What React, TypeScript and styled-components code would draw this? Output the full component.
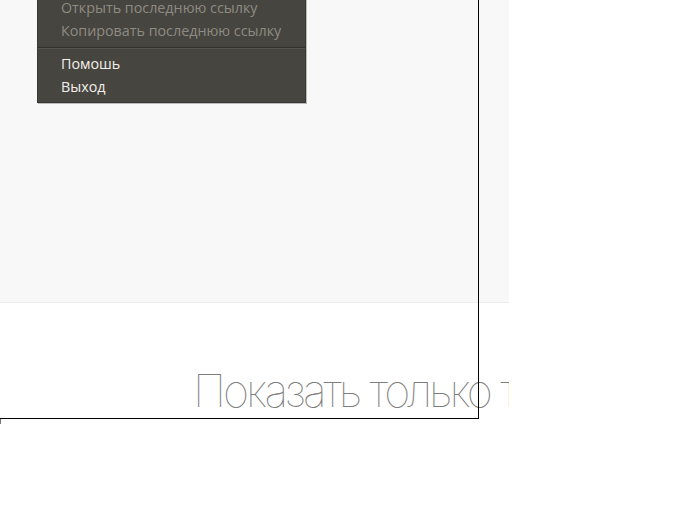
import React from "react";
import styled, { createGlobalStyle } from "styled-components";

const GlobalStyle = createGlobalStyle`
  html, body {
    margin: 0;
    padding: 0;
    background: #ffffff;
  }
  body {
    font-family: "Open Sans", "Noto Sans", sans-serif;
  }
`;

const Page = styled.div`
  position: relative;
  display: flex;
  flex-direction: column;
  width: 509px;
  height: 528px;
  overflow: hidden;
`;

const Panel = styled.div`
  position: relative;
  flex: 0 0 302px;
  background: #f8f8f8;
  border-bottom: 1px solid #ececec;
`;

const Menu = styled.ul`
  position: absolute;
  top: -3px;
  left: 37px;
  width: 267px;
  margin: 0;
  padding: 0 0 4px;
  list-style: none;
  display: flex;
  flex-direction: column;
  background: #474540;
  border: 1px solid #3a3935;
  border-top: none;
  box-shadow: 1px 1px 0 rgba(0, 0, 0, 0.25);
`;

const Item = styled.li<{ $disabled?: boolean }>`
  height: 22.5px;
  line-height: 22.5px;
  padding-left: 23px;
  font-size: 14.3px;
  white-space: nowrap;
  color: ${(p) => (p.$disabled ? "#8e8b83" : "#f2f0ea")};
`;

const Separator = styled.li`
  height: 1px;
  margin: 5px 0 4px;
  background: #33322e;
  border-bottom: 1px solid #55534d;
`;

const Hero = styled.div`
  display: flex;
  padding: 65px 0 0 193px;
`;

const Title = styled.h1`
  margin: 0;
  font-family: "Inter", "Roboto", sans-serif;
  font-weight: 100;
  font-size: 45px;
  line-height: 1;
  letter-spacing: -3px;
  word-spacing: 1px;
  color: #7d7d7d;
  white-space: nowrap;
`;

const Frame = styled.div`
  position: absolute;
  left: -2px;
  top: -2px;
  width: 479px;
  height: 419px;
  border: 1px solid #000;
  pointer-events: none;
`;

const Tick = styled.div`
  position: absolute;
  left: 0;
  top: 419px;
  width: 1px;
  height: 5px;
  background: #777;
`;

const items = [
  { label: "Открыть последнюю ссылку", disabled: true },
  { label: "Копировать последнюю ссылку", disabled: true },
  { sep: true },
  { label: "Помошь" },
  { label: "Выход" },
];

export default function App() {
  return (
    <>
      <GlobalStyle />
      <Page>
        <Panel>
          <Menu>
            {items.map((it, i) =>
              it.sep ? (
                <Separator key={i} />
              ) : (
                <Item key={i} $disabled={it.disabled}>
                  {it.label}
                </Item>
              )
            )}
          </Menu>
        </Panel>
        <Hero>
          <Title>Показать только т</Title>
        </Hero>
        <Frame />
        <Tick />
      </Page>
    </>
  );
}
